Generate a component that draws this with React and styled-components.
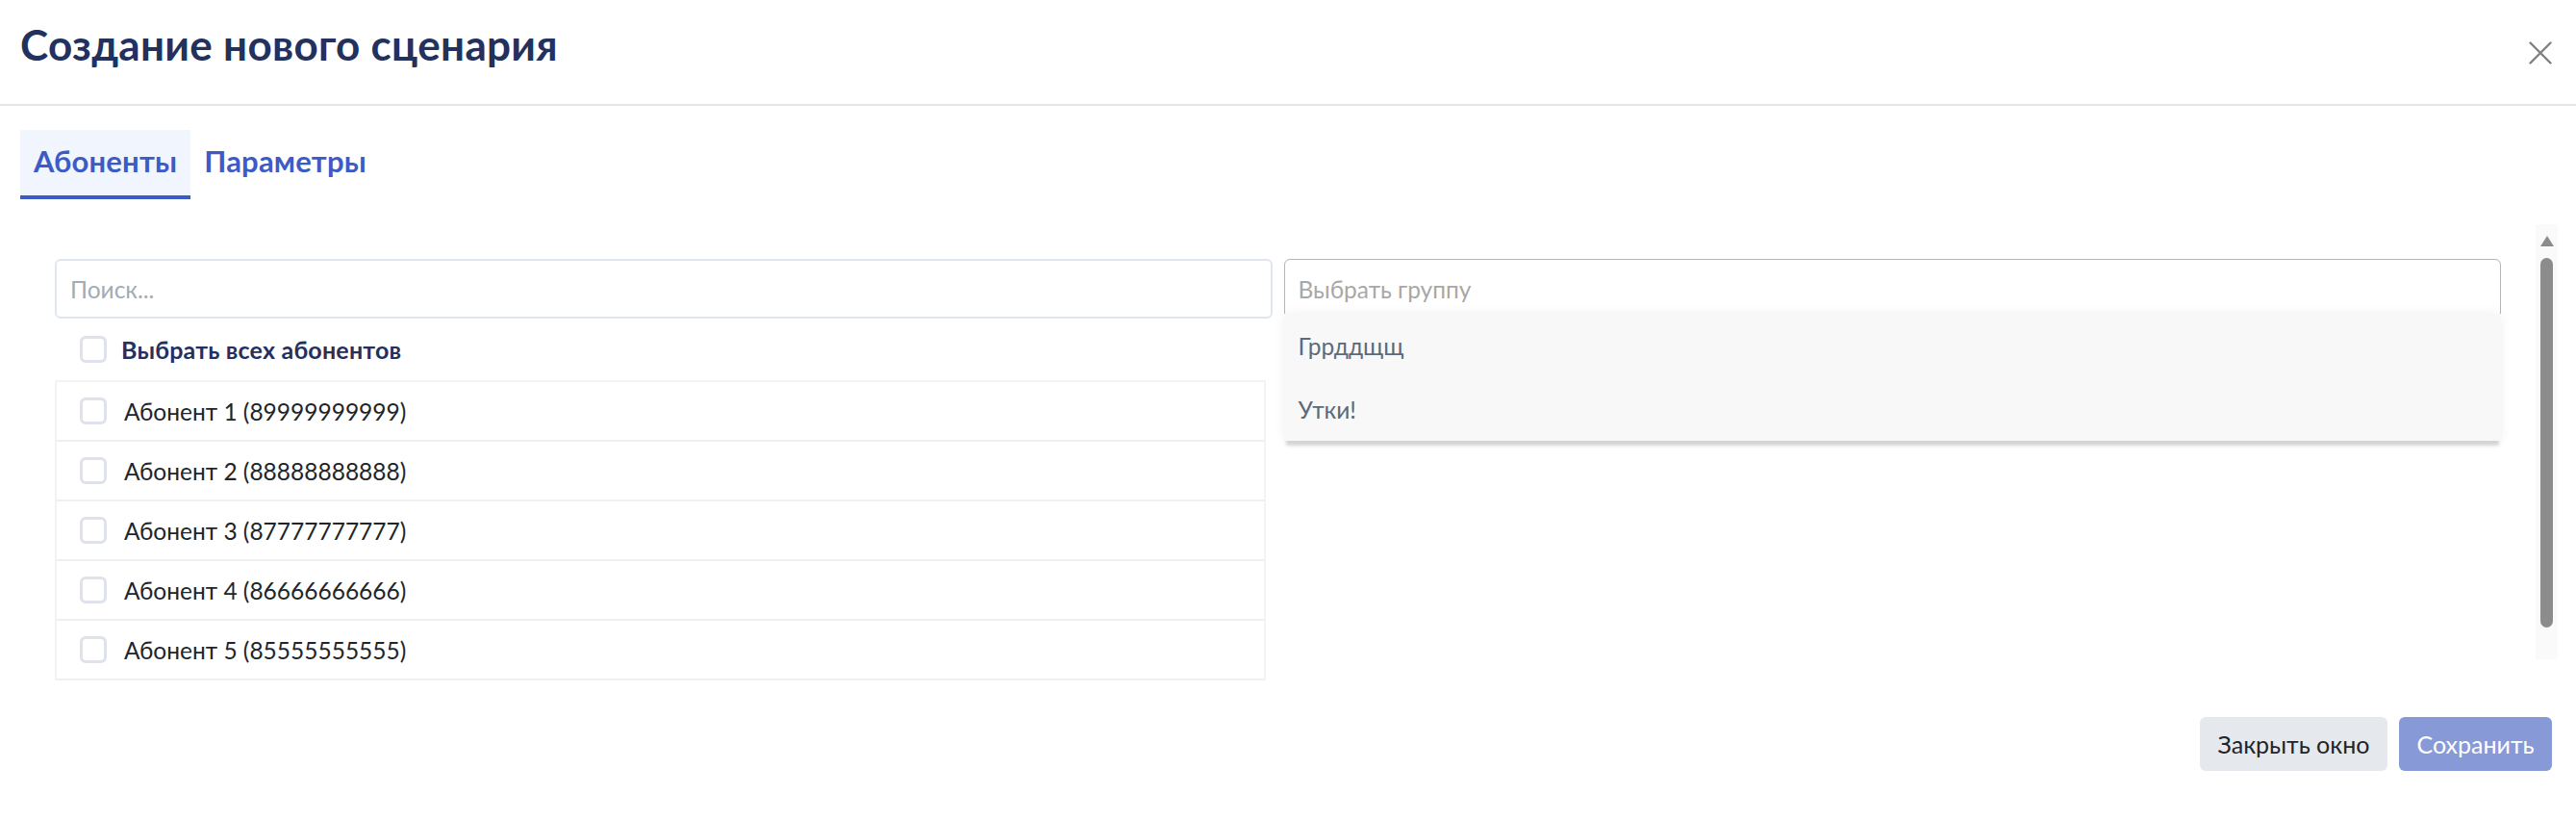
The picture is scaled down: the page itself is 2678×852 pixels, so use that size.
import React from "react";
import styled, { createGlobalStyle } from "styled-components";

const GlobalStyle = createGlobalStyle`
  html, body {
    margin: 0;
    padding: 0;
    background: #ffffff;
  }
  body {
    font-family: "Lato", "Noto Sans", sans-serif;
    color: #212529;
  }
  * {
    box-sizing: border-box;
  }
`;

const Modal = styled.div`
  width: 2678px;
  height: 852px;
  background: #fff;
  overflow: hidden;
`;

const Header = styled.div`
  height: 110px;
  display: flex;
  align-items: flex-start;
  justify-content: space-between;
  padding: 0 25px 0 21px;
  border-bottom: 2px solid #e6e6e6;
`;

const Title = styled.h1`
  margin: 20px 0 0;
  font-size: 44px;
  line-height: 1.2;
  font-weight: 700;
  letter-spacing: 0.3px;
  color: #22315e;
`;

const CloseButton = styled.button`
  margin-top: 43px;
  width: 24px;
  height: 24px;
  padding: 0;
  border: none;
  background: none;
  cursor: pointer;
  svg {
    display: block;
  }
`;

const Tabs = styled.div`
  display: flex;
  margin-top: 25px;
  padding-left: 21px;
`;

const Tab = styled.div`
  height: 72px;
  display: flex;
  align-items: center;
  padding: 0 14px 4px;
  font-size: 31px;
  font-weight: 700;
  letter-spacing: 0.2px;
  color: #3d5bc6;
  background: ${(p) => (p.active ? "#f0f5fe" : "transparent")};
  border-bottom: 4px solid ${(p) => (p.active ? "#3d5bc6" : "transparent")};
`;

const Body = styled.div`
  display: flex;
  margin-top: 26px;
  padding: 0 19px 0 21px;
`;

const Content = styled.div`
  flex: 1;
  display: grid;
  grid-template-columns: 1fr 1fr;
  column-gap: 12px;
  align-items: start;
  padding: 36px 36px 0;
`;

const Column = styled.div`
  display: flex;
  flex-direction: column;
`;

const SearchInput = styled.input`
  height: 62px;
  padding: 0 14px;
  border: 2px solid #dfe6ef;
  border-radius: 6px;
  font-family: inherit;
  font-size: 24.5px;
  color: #212529;
  outline: none;
  &::placeholder {
    color: #a3abb3;
  }
`;

const SelectAll = styled.label`
  height: 64px;
  display: flex;
  align-items: center;
  gap: 15px;
  padding-left: 26px;
  font-size: 25px;
  font-weight: 700;
  letter-spacing: 0.2px;
  color: #22315e;
`;

const Box = styled.span`
  flex: none;
  width: 28px;
  height: 28px;
  border: 3px solid #dfe2ea;
  border-radius: 6px;
  background: #fff;
`;

const List = styled.div`
  width: calc(100% - 7px);
  border: 2px solid #f3f3f3;
  border-bottom: none;
`;

const Row = styled.label`
  height: 62px;
  display: flex;
  align-items: center;
  gap: 18px;
  padding-left: 24px;
  border-bottom: 2px solid #efefef;
  font-size: 24.5px;
  color: #212529;
`;

const SelectWrap = styled.div`
  position: relative;
`;

const SelectBox = styled.div`
  height: 62px;
  display: flex;
  align-items: center;
  padding: 0 14px;
  border: 1.5px solid #b5b5b5;
  border-radius: 6px;
  font-size: 24.5px;
  color: #a8a8a8;
`;

const Menu = styled.div`
  position: absolute;
  top: 57px;
  left: 0;
  right: 0;
  background: #f8f8f8;
  box-shadow: 0 7px 3px -2px rgba(0, 0, 0, 0.15), 0 0 12px rgba(0, 0, 0, 0.06);
`;

const MenuItem = styled.div`
  height: 66px;
  display: flex;
  align-items: center;
  padding-left: 15px;
  font-size: 24.5px;
  color: #5b6a7b;
`;

const ScrollTrack = styled.div`
  flex: none;
  width: 23px;
  height: 452px;
  background: #fafafa;
  display: flex;
  flex-direction: column;
  align-items: center;
  padding-top: 12px;
`;

const ScrollArrow = styled.div`
  width: 0;
  height: 0;
  border-left: 7.5px solid transparent;
  border-right: 7.5px solid transparent;
  border-bottom: 11px solid #8c8c8c;
`;

const ScrollThumb = styled.div`
  width: 13px;
  height: 384px;
  margin-top: 12px;
  border-radius: 7px;
  background: #8c8c8c;
`;

const Footer = styled.div`
  display: flex;
  justify-content: flex-end;
  gap: 12px;
  margin-top: 38px;
  padding-right: 25px;
`;

const Button = styled.button`
  width: ${(p) => p.width}px;
  height: 56px;
  padding: 0;
  display: flex;
  align-items: center;
  justify-content: center;
  border: none;
  border-radius: 6px;
  font-family: inherit;
  font-size: 25px;
  color: ${(p) => (p.primary ? "#ffffff" : "#212529")};
  background: ${(p) => (p.primary ? "#8799d6" : "#e5e8ed")};
  cursor: pointer;
`;

const subscribers = [
  "Абонент 1 (89999999999)",
  "Абонент 2 (88888888888)",
  "Абонент 3 (87777777777)",
  "Абонент 4 (86666666666)",
  "Абонент 5 (85555555555)",
];

const groups = ["Гррддщщ", "Утки!"];

export default function App() {
  return (
    <Modal>
      <GlobalStyle />
      <Header>
        <Title>Создание нового сценария</Title>
        <CloseButton aria-label="Закрыть">
          <svg width="24" height="24" viewBox="0 0 24 24">
            <path
              d="M1.5 1.5 L22.5 22.5 M22.5 1.5 L1.5 22.5"
              stroke="#808080"
              strokeWidth="2.4"
              strokeLinecap="round"
            />
          </svg>
        </CloseButton>
      </Header>

      <Tabs>
        <Tab active>Абоненты</Tab>
        <Tab>Параметры</Tab>
      </Tabs>

      <Body>
        <Content>
          <Column>
            <SearchInput placeholder="Поиск..." />
            <SelectAll>
              <Box />
              Выбрать всех абонентов
            </SelectAll>
            <List>
              {subscribers.map((name) => (
                <Row key={name}>
                  <Box />
                  {name}
                </Row>
              ))}
            </List>
          </Column>
          <SelectWrap>
            <SelectBox>Выбрать группу</SelectBox>
            <Menu>
              {groups.map((g) => (
                <MenuItem key={g}>{g}</MenuItem>
              ))}
            </Menu>
          </SelectWrap>
        </Content>
        <ScrollTrack>
          <ScrollArrow />
          <ScrollThumb />
        </ScrollTrack>
      </Body>

      <Footer>
        <Button width={195}>Закрыть окно</Button>
        <Button primary width={159}>
          Сохранить
        </Button>
      </Footer>
    </Modal>
  );
}
